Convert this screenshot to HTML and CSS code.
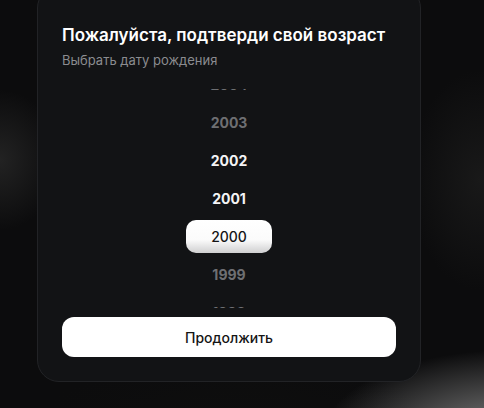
FILE: index.html
```html
<!DOCTYPE html>
<html lang="ru">
<head>
    <meta charset="UTF-8">
    <meta name="viewport" content="width=device-width, initial-scale=1.0">
    <title>Возраст</title>
    <link rel="stylesheet" href="styles.css">
</head>
<body>
    <div class="backdrop">
        <div class="card">
            <h1 class="title">Пожалуйста, подтверди свой возраст</h1>
            <p class="subtitle">Выбрать дату рождения</p>
            <div class="picker">
                <div class="year dim first">2004</div>
                <div class="year dim">2003</div>
                <div class="year">2002</div>
                <div class="year">2001</div>
                <div class="year selected"><span>2000</span></div>
                <div class="year dim">1999</div>
                <div class="year dim">1998</div>
            </div>
            <button class="continue">Продолжить</button>
        </div>
    </div>
</body>
</html>
```

FILE: styles.css
```css
* {
    box-sizing: border-box;
}
body {
    margin: 0;
    height: 408px;
    overflow: hidden;
    font-family: 'Inter', 'Noto Sans', sans-serif;
    color: #fff;
    background:
        radial-gradient(ellipse 190px 90px at 510px 440px, rgba(154, 154, 154, 1), rgba(110, 110, 110, 0.75) 40%, rgba(80, 80, 80, 0) 100%),
        radial-gradient(ellipse 60px 70px at 0px 160px, rgba(40, 40, 40, 0.8), rgba(40, 40, 40, 0) 100%),
        radial-gradient(ellipse 70px 110px at 480px 180px, rgba(28, 28, 28, 0.8), rgba(28, 28, 28, 0) 100%),
        radial-gradient(ellipse 200px 60px at 240px 420px, rgba(14, 14, 14, 1), rgba(14, 14, 14, 0) 100%),
        #0c0c0d;
}
.backdrop {
    padding-left: 37px;
}
.card {
    width: 384px;
    margin-top: -14px;
    padding: 37px 24px 24px;
    background: #121315;
    border: 1px solid #222326;
    border-radius: 22px;
}
.title {
    margin: 0;
    font-size: 17px;
    font-weight: 600;
    line-height: 22px;
}
.subtitle {
    margin: 5px 0 0;
    font-size: 13px;
    line-height: 18px;
    color: #8b8c90;
}
.picker {
    height: 219px;
    margin-top: 20px;
    overflow: hidden;
    display: flex;
    flex-direction: column;
    align-items: center;
}
.year {
    flex: none;
    height: 38px;
    display: flex;
    align-items: center;
    justify-content: center;
    font-size: 14px;
    font-weight: 700;
    color: #f4f4f5;
}
.year.first {
    margin-top: -24px;
}
.year.dim {
    color: #6e6f72;
}
.year.selected span {
    width: 86px;
    height: 33px;
    display: flex;
    align-items: center;
    justify-content: center;
    border-radius: 10px;
    background: linear-gradient(180deg, #ffffff 0%, #fbfbfb 60%, #cfcfd0 100%);
    color: #141414;
    font-weight: 500;
}
.continue {
    display: block;
    width: 100%;
    height: 40px;
    margin-top: 9px;
    border: none;
    border-radius: 12px;
    background: #fff;
    color: #151515;
    font-family: inherit;
    font-size: 14px;
    font-weight: 500;
}
```
